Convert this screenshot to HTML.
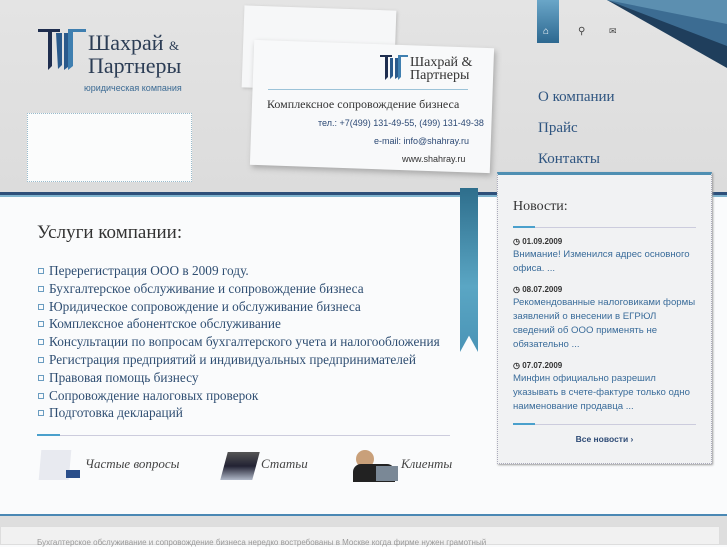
<!DOCTYPE html>
<html><head><meta charset="utf-8"><style>
*{margin:0;padding:0;box-sizing:border-box}
body{width:727px;height:545px;overflow:hidden;background:#fafbfc;position:relative;font-family:"Liberation Serif","Noto Serif CJK SC",serif}
.hdr{position:absolute;left:0;top:0;width:727px;height:193px;background:linear-gradient(#e4e4e4,#dcdcdc)}
.line{position:absolute;left:0;top:192px;width:727px;height:3px;background:#2d4f7a}
.line2{position:absolute;left:0;top:195px;width:727px;height:2px;background:#7fb4cf}
.a{position:absolute}
.logo1{font-size:22px;color:#2c3d55;line-height:20px}
.menu{font-size:15px;color:#2f5580}
ul{list-style:none;position:absolute;left:37px;top:262px}
li{font-size:13.3px;color:#2f4e72;height:17.8px;line-height:17.8px;padding-left:12px;position:relative}
li:before{content:"";position:absolute;left:1px;top:6px;width:4px;height:4px;border:1px solid #6a9cc0}
.news{position:absolute;left:497px;top:172px;width:215px;height:292px;background:#f1f2f3;border:1px dotted #aab;border-top:3px solid #4f8fb2;box-shadow:1px 1px 2px #999;font-family:"Liberation Sans",sans-serif}
.d{font-size:8px;font-weight:bold;color:#333;margin-top:8px;line-height:12px}
.t{font-size:9.6px;color:#3a6c9a;line-height:14px}
.ic{font-size:13px;font-style:italic;color:#444;position:absolute;top:456px}
</style></head><body>
<div class="hdr"></div>
<svg class="a" style="left:38px;top:27px" width="50" height="44"><path d="M0 2h22v3H14v34l-4 4V5H0z" fill="#1f2e4f"/><path d="M18 6h6v32l-4 4z M26 6h4v34l-4 3z" fill="#2a5a8c"/><path d="M30 2h18v3H35v34l-5 4z" fill="#3f7fb0"/></svg>
<div class="a logo1" style="left:88px;top:33px">Шахрай <span style="font-size:13px">&amp;</span><br>Партнеры</div>
<div class="a" style="left:84px;top:83px;font:9px 'Liberation Sans',sans-serif;color:#3b6a93">юридическая компания</div>
<div class="a" style="left:27px;top:113px;width:165px;height:69px;background:#fbfcfc;border:1px dotted #9bc"></div>
<div class="a" style="left:243px;top:8px;width:152px;height:82px;background:#f6f7f8;transform:rotate(2deg);box-shadow:1px 1px 3px #bbb"></div>
<div class="a" style="left:252px;top:44px;width:240px;height:125px;background:#f8f9fa;transform:rotate(2deg);box-shadow:2px 3px 6px #aaa"></div>
<svg class="a" style="left:380px;top:54px" width="28" height="28"><path d="M0 1h12v2H8v20l-3 3V3H0z" fill="#1f2e4f"/><path d="M10 4h3v18l-3 3z M15 4h3v19l-3 2z" fill="#2a5a8c"/><path d="M18 1h10v2h-7v20l-3 3z" fill="#3f7fb0"/></svg>
<div class="a" style="left:410px;top:56px;font-size:14px;line-height:13px;color:#333">Шахрай &amp;<br>Партнеры</div>
<div class="a" style="left:268px;top:89px;width:200px;height:1px;background:#9cc3d8"></div>
<div class="a" style="left:267px;top:97px;font-size:12px;color:#333">Комплексное сопровождение бизнеса</div>
<div class="a" style="left:318px;top:118px;font:9px 'Liberation Sans',sans-serif;color:#2d4a75">тел.: +7(499) 131-49-55, (499) 131-49-38</div>
<div class="a" style="left:374px;top:136px;font:9px 'Liberation Sans',sans-serif;color:#2d4a75">e-mail: info@shahray.ru</div>
<div class="a" style="left:402px;top:154px;font:9px 'Liberation Sans',sans-serif;color:#333">www.shahray.ru</div>
<div class="a" style="left:537px;top:0;width:22px;height:43px;background:linear-gradient(#6aa6c8,#2d6890)"></div>
<div class="a" style="left:543px;top:26px;color:#fff;font-size:10px">⌂</div>
<div class="a" style="left:578px;top:26px;color:#444;font-size:10px">⚲</div>
<div class="a" style="left:609px;top:26px;color:#444;font-size:9px">✉</div>
<svg class="a" style="left:597px;top:0" width="130" height="70"><path d="M10 0h120v68z" fill="#1f3e5c"/><path d="M10 0h120v46z" fill="#3c6c92"/><path d="M10 0h120v24z" fill="#5c8fb0"/></svg>
<div class="a menu" style="left:538px;top:89px">О компании</div>
<div class="a menu" style="left:538px;top:120px">Прайс</div>
<div class="a menu" style="left:538px;top:151px">Контакты</div>
<div class="line"></div><div class="line2"></div>
<div class="a" style="left:460px;top:188px;width:18px;height:164px;background:linear-gradient(#2e6e8c,#5aa6c4 60%,#4a94b6);clip-path:polygon(0 0,100% 0,100% 100%,50% 90%,0 100%)"></div>
<div class="a" style="left:37px;top:222px;font-size:19px;color:#333">Услуги компании:</div>
<ul>
<li>Перерегистрация ООО в 2009 году.</li>
<li>Бухгалтерское обслуживание и сопровождение бизнеса</li>
<li>Юридическое сопровождение и обслуживание бизнеса</li>
<li>Комплексное абонентское обслуживание</li>
<li>Консультации по вопросам бухгалтерского учета и налогообложения</li>
<li>Регистрация предприятий и индивидуальных предпринимателей</li>
<li>Правовая помощь бизнесу</li>
<li>Сопровождение налоговых проверок</li>
<li>Подготовка деклараций</li>
</ul>
<div class="a" style="left:37px;top:435px;width:413px;height:1px;background:#ccd"></div>
<div class="a" style="left:37px;top:434px;width:23px;height:2px;background:#4aa0cc"></div>
<div class="a" style="left:40px;top:450px;width:30px;height:30px;background:#e8eaf0;transform:skew(-5deg)"></div>
<div class="a" style="left:66px;top:470px;width:14px;height:8px;background:#2a4e8a"></div>
<div class="ic" style="left:85px">Частые вопросы</div>
<div class="a" style="left:224px;top:452px;width:32px;height:28px;background:linear-gradient(#555,#223 50%,#b0b8c8);transform:skew(-15deg)"></div>
<div class="ic" style="left:261px">Статьи</div>
<div class="a" style="left:356px;top:450px;width:18px;height:18px;border-radius:50%;background:#c9a07a"></div>
<div class="a" style="left:353px;top:464px;width:42px;height:18px;background:#222;border-radius:8px 8px 0 0"></div>
<div class="a" style="left:376px;top:466px;width:22px;height:15px;background:#7a8896"></div>
<div class="ic" style="left:401px">Клиенты</div>
<div class="news">
<div style="padding:0 15px">
<div style="font:14px 'Liberation Serif',serif;color:#333;margin-top:24px">Новости:</div>
<div style="height:1px;background:#ccd;margin-top:12px;position:relative"><div style="position:absolute;left:0;top:-1px;width:22px;height:2px;background:#4aa0cc"></div></div>
<div class="d" style="margin-top:8px">◷ 01.09.2009</div><div class="t">Внимание! Изменился адрес основного офиса. ...</div>
<div class="d">◷ 08.07.2009</div><div class="t">Рекомендованные налоговиками формы заявлений о внесении в ЕГРЮЛ сведений об ООО применять не обязательно ...</div>
<div class="d">◷ 07.07.2009</div><div class="t">Минфин официально разрешил указывать в счете-фактуре только одно наименование продавца ...</div>
<div style="height:1px;background:#ccd;margin-top:10px;position:relative"><div style="position:absolute;left:0;top:-1px;width:22px;height:2px;background:#4aa0cc"></div></div>
<div style="text-align:center;font-size:8.5px;font-weight:bold;color:#2d4a75;margin-top:9px">Все новости ›</div>
</div></div>
<div class="a" style="left:0;top:514px;width:727px;height:2px;background:#4a88b4"></div>
<div class="a" style="left:0;top:516px;width:727px;height:29px;background:#dedede"></div>
<div class="a" style="left:0;top:526px;width:720px;height:19px;background:#f1f1f1;border:1px solid #ddd"></div>
<div class="a" style="left:37px;top:538px;font:8px 'Liberation Sans',sans-serif;color:#999">Бухгалтерское обслуживание и сопровождение бизнеса нередко востребованы в Москве когда фирме нужен грамотный</div>
</body></html>
